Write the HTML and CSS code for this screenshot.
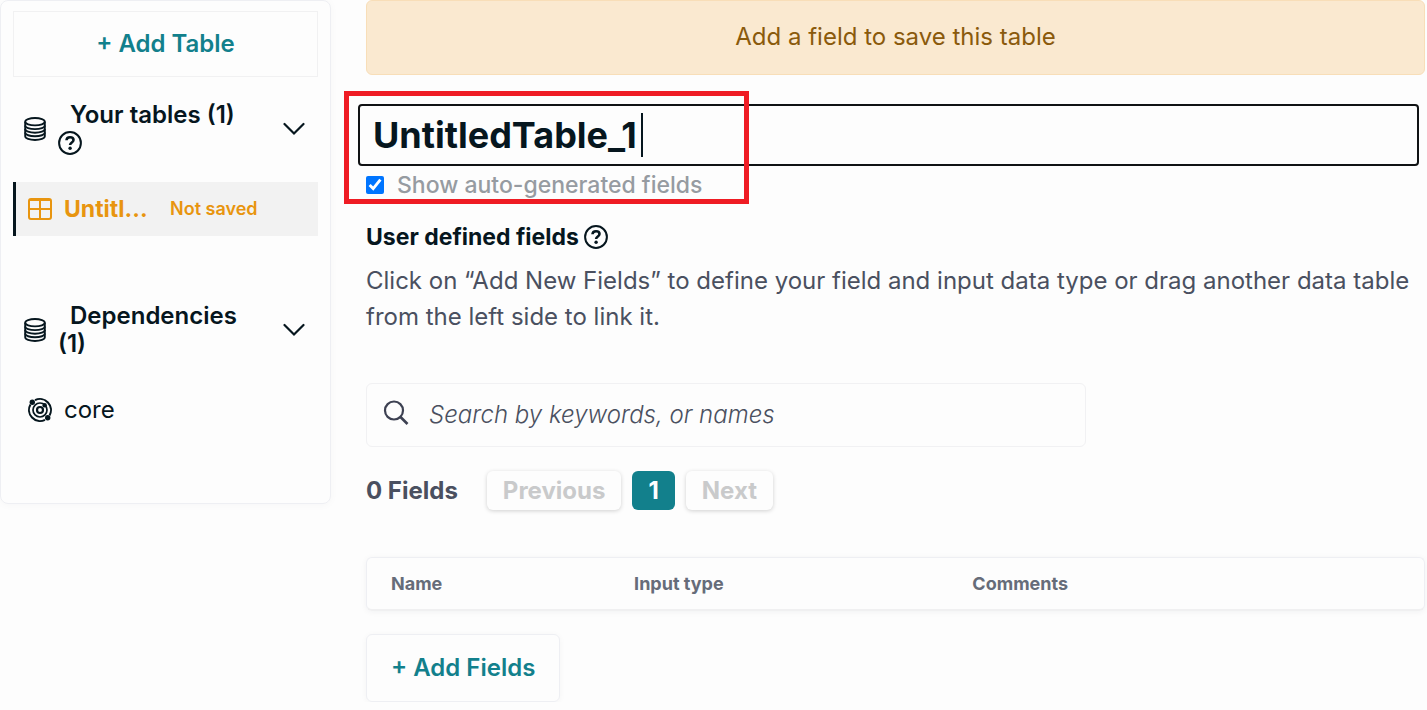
FILE: index.html
```html
<!DOCTYPE html>
<html lang="en">
<head>
<meta charset="utf-8">
<meta name="viewport" content="width=device-width, initial-scale=1">
<title>Database tables</title>
<link rel="stylesheet" href="styles.css">
</head>
<body>
<svg class="defs" aria-hidden="true">
  <symbol id="db" viewBox="0 0 22 24">
    <g fill="none" stroke="currentColor" stroke-width="1.900">
      <ellipse cx="11" cy="4.700" rx="9.800" ry="3.700"/>
      <path d="M1.200 4.700v14.600c0 2.100 4.400 3.700 9.800 3.700s9.800-1.600 9.800-3.700V4.700"/>
      <path d="M1.200 8.400c0 2.100 4.400 3.700 9.800 3.700s9.800-1.600 9.800-3.700M1.200 12c0 2.100 4.400 3.700 9.800 3.700s9.800-1.600 9.800-3.700M1.200 15.600c0 2.100 4.400 3.700 9.800 3.700s9.800-1.600 9.800-3.700"/>
    </g>
  </symbol>
  <symbol id="chevron" viewBox="0 0 22 14">
    <path d="M1.500 2 11 11.500 20.500 2" fill="none" stroke="currentColor" stroke-width="2.200" stroke-linecap="round"/>
  </symbol>
  <symbol id="help" viewBox="0 0 24 24">
    <circle cx="12" cy="12" r="10.900" fill="none" stroke="currentColor" stroke-width="2"/>
    <path d="M8.500 9.300c.1-2 1.500-3 3.500-3 2.100 0 3.500 1 3.500 2.700 0 2.500-3.400 2.500-3.400 5.100" fill="none" stroke="currentColor" stroke-width="2.600"/>
    <circle cx="12.100" cy="17.200" r="1.700" fill="currentColor"/>
  </symbol>
</svg>
<div class="layout">
  <aside class="sidebar">
    <button class="add-table" type="button">+ Add Table</button>
    <section class="group">
      <button class="group-head" type="button">
        <svg class="icon-db"><use href="#db"/></svg>
        <span class="group-title"><span class="group-name">Your tables (1)</span> <svg class="icon-help" role="img" aria-label="Help"><use href="#help"/></svg></span>
        <svg class="icon-chevron"><use href="#chevron"/></svg>
      </button>
      <a class="item item-active" href="#untitled">
        <svg class="icon-item" viewBox="0 0 24 24"><g fill="none" stroke="currentColor" stroke-width="2"><rect x="1" y="2" width="22" height="20" rx="2"/><path d="M12 2v20M1 12h22"/></g><path d="M1 2h22v2H1z" fill="currentColor"/></svg>
        <span class="item-name">Untitl...</span>
        <span class="item-status">Not saved</span>
      </a>
    </section>
    <section class="group">
      <button class="group-head" type="button">
        <svg class="icon-db"><use href="#db"/></svg>
        <span class="group-title"><span class="group-name">Dependencies</span> (1)</span>
        <svg class="icon-chevron"><use href="#chevron"/></svg>
      </button>
      <a class="item" href="#core">
        <svg class="icon-item" viewBox="0 0 24 24"><g fill="none" stroke="currentColor"><path d="M7 2.200A11 11 0 0 1 21.500 17.500M17 21.800A11 11 0 0 1 2.500 6.500" stroke-width="2"/><circle cx="12" cy="12" r="7" stroke-width="1.700"/><circle cx="12" cy="12" r="3" stroke-width="2.200"/></g><g fill="currentColor"><circle cx="4.300" cy="4.300" r="2.700"/><circle cx="19.700" cy="19.700" r="2.700"/><circle cx="16.700" cy="7.300" r="2.200"/></g></svg>
        <span>core</span>
      </a>
    </section>
  </aside>
  <main class="content">
    <div class="notice" role="status">Add a field to save this table</div>
    <section class="naming">
      <div class="name-field">
        <input class="name-input" type="text" value="UntitledTable_1" aria-label="Table name">
        <span class="caret"></span>
      </div>
      <label class="toggle"><input class="toggle-box" type="checkbox" checked>Show auto-generated fields</label>
      <div class="highlight"></div>
    </section>
    <h2 class="heading">User defined fields <svg class="icon-help" role="img" aria-label="Help"><use href="#help"/></svg></h2>
    <p class="intro">Click on “Add New Fields” to define your field and input data type or drag another data table from the left side to link it.</p>
    <label class="search">
      <svg class="icon-search" viewBox="0 0 26 26" aria-hidden="true"><g fill="none" stroke="currentColor" stroke-width="2.200"><circle cx="11" cy="10.500" r="9"/><path d="M17.500 17l7 7" stroke-width="2.600"/></g></svg>
      <input class="search-input" type="search" placeholder="Search by keywords, or names" aria-label="Search fields">
    </label>
    <nav class="pager" aria-label="Pages">
      <strong class="pager-count">0 Fields</strong>
      <button class="page" type="button" disabled>Previous</button>
      <button class="page page-current" type="button">1</button>
      <button class="page" type="button" disabled>Next</button>
    </nav>
    <table class="fields">
      <thead><tr><th class="col-name">Name</th><th class="col-type">Input type</th><th>Comments</th></tr></thead>
    </table>
    <button class="add-fields" type="button">+ Add Fields</button>
  </main>
</div>
</body>
</html>
```
FILE: styles.css
```css
* { box-sizing: border-box; }
body {
  margin: 0;
  background: #fdfdfd;
  color: #06161e;
  font: 400 24px/28px Inter, sans-serif;
}
button, input { font: inherit; color: inherit; background: none; margin: 0; }
button { cursor: pointer; }
svg { flex: none; }
.defs { position: absolute; width: 0; height: 0; }

.layout { display: flex; align-items: flex-start; gap: 35px; padding-right: 2px; }

.sidebar {
  flex: none;
  width: 331px;
  padding: 10px 12px 66px;
  border: 1px solid #eeeff3;
  border-radius: 8px;
  box-shadow: 0 1px 8px rgba(20, 30, 60, 0.03);
}
.add-table {
  width: 100%;
  height: 66px;
  border: 1px solid #f1f1f2;
  color: #12808c;
  font-weight: 600;
}
.group { margin-top: 24px; }
.group + .group { margin-top: 66px; }
.group-head {
  display: flex;
  align-items: center;
  width: 100%;
  padding: 0 13px 0 11px;
  border: 0;
  text-align: left;
  font-weight: 600;
}
.icon-db { width: 22px; height: 24px; margin-right: 12px; }
.group-title { flex: 1; margin-right: 36px; }
.group-name { margin-left: 12px; white-space: nowrap; }
.icon-chevron { width: 22px; height: 14px; }
.icon-help { width: 24px; height: 24px; vertical-align: -4px; }
.item {
  display: flex;
  align-items: center;
  gap: 12px;
  height: 54px;
  margin-top: 25px;
  padding-left: 12px;
  border-left: 3px solid transparent;
  color: inherit;
  text-decoration: none;
}
.item-active { background: #f2f2f2; border-color: #06161e; color: #e8950f; font-weight: 600; }
.icon-item { width: 24px; height: 24px; }
.item-name { width: 86px; white-space: nowrap; }
.item-active .item-name { font-size: 23px; font-weight: 700; }
.item-status { margin-left: 8px; font-size: 18px; white-space: nowrap; }

.content { flex: 1; min-width: 0; }
.notice {
  padding: 22px 24px 23px;
  border: 1px solid #f8deb8;
  border-radius: 6px;
  background: #fae9d0;
  color: #8a5a0c;
  text-align: center;
}
.naming { position: relative; margin: 29px 6px 0 -8px; }
.name-field { position: relative; }
.name-input {
  display: block;
  width: 100%;
  height: 62px;
  padding: 0 13px;
  border: 2px solid #101214;
  border-radius: 4px;
  font-size: 36px;
  font-weight: 700;
}
.caret { position: absolute; left: 283px; top: 9px; width: 2px; height: 44px; background: #06161e; }
.toggle { display: flex; align-items: center; gap: 13px; margin: 5px 0 0 8px; color: #969ba1; font-size: 23px; font-weight: 500; }
.toggle-box { width: 18px; height: 18px; accent-color: #0075ff; }
.highlight {
  position: absolute;
  left: -14px;
  top: -13px;
  width: 405px;
  height: 113px;
  border: 5px solid #ef1c24;
  pointer-events: none;
}
.heading { margin: 24px 0 0; font-size: 23px; line-height: 28px; font-weight: 700; }
.intro { margin: 12px 0 0; color: #4a5060; line-height: 36px; }
.search {
  display: flex;
  align-items: center;
  gap: 20px;
  width: 720px;
  max-width: 100%;
  height: 64px;
  margin-top: 48px;
  padding: 0 16px;
  border: 1px solid #f1f1f3;
  border-radius: 6px;
}
.icon-search { width: 26px; height: 26px; margin-bottom: 4px; color: #3d4152; }
.search-input { flex: 1; min-width: 0; padding: 0; border: 0; outline: 0; font-style: italic; font-weight: 300; }
.search-input::placeholder { color: #4a5060; opacity: 1; }
.pager { display: flex; align-items: center; gap: 11px; margin-top: 24px; }
.pager-count { margin-right: 18px; color: #4a5060; font-weight: 700; }
.page {
  height: 39px;
  padding: 0 16px;
  border: 0;
  border-radius: 6px;
  box-shadow: 0 1px 4px rgba(0, 0, 0, 0.18);
  color: #c9cacb;
  font-weight: 700;
}
.page-current { background: #12808c; color: #fff; box-shadow: none; }
.fields {
  width: 100%;
  height: 54px;
  margin-top: 47px;
  border: 1px solid #eeeff3;
  border-bottom: 2px solid #f0f0f1;
  border-radius: 6px;
  border-spacing: 0;
  table-layout: fixed;
  box-shadow: 0 1px 6px rgba(20, 30, 60, 0.05);
}
.fields th { padding: 0 0 0 24px; text-align: left; font-size: 18px; font-weight: 700; color: #666c79; }
.col-name { width: 23%; }
.col-type { width: 32%; }
.add-fields {
  height: 68px;
  margin-top: 23px;
  padding: 0 24px;
  border: 1px solid #eeeff3;
  border-radius: 6px;
  box-shadow: 0 1px 6px rgba(20, 30, 60, 0.04);
  color: #12808c;
  font-weight: 600;
}
```
